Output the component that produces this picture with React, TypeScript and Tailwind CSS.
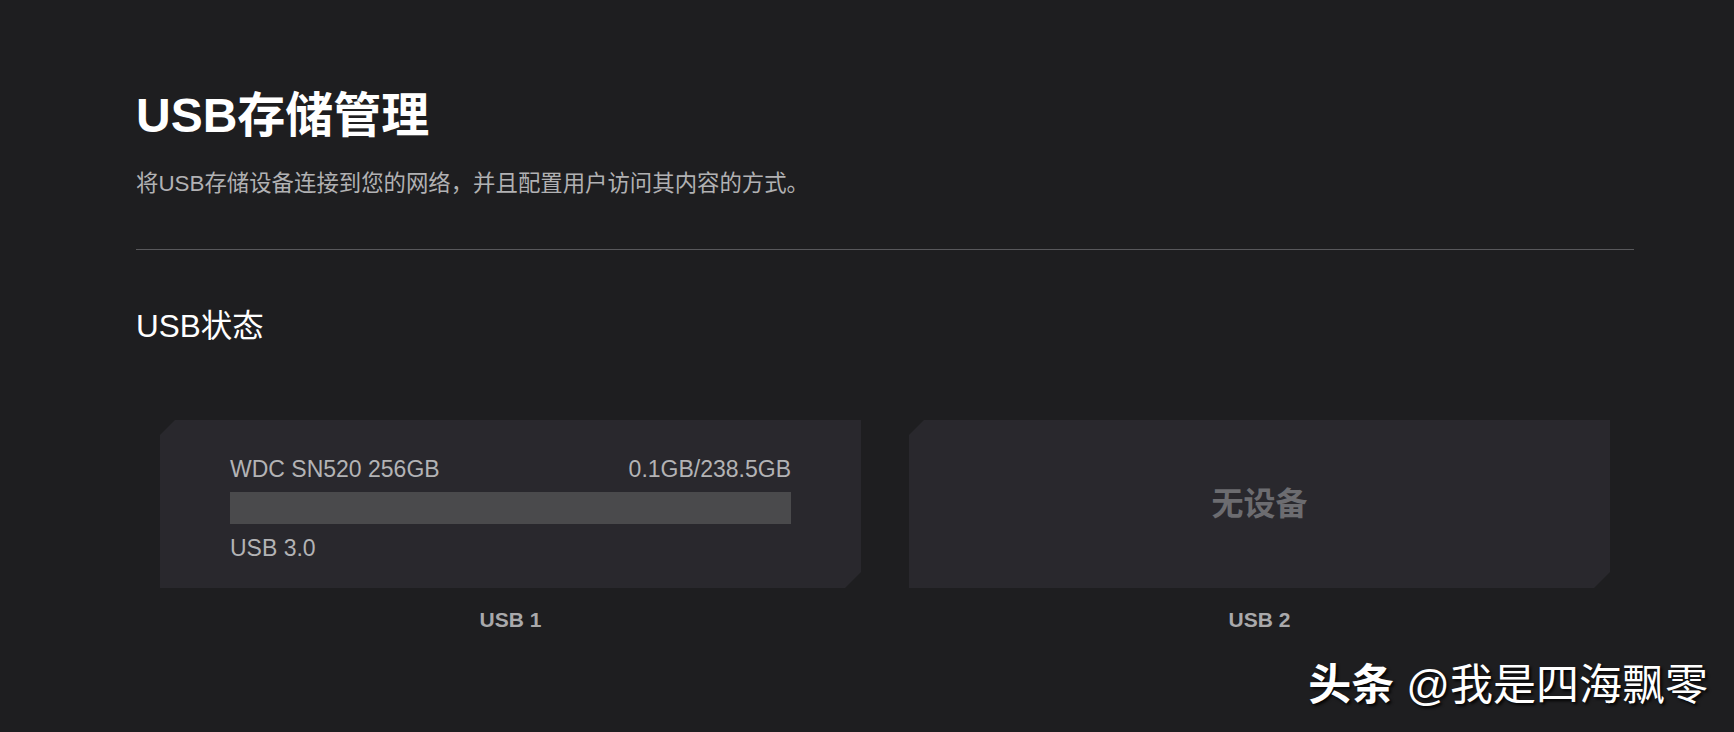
import React from 'react';

type Port = {
  id: number;
  device: null | { name: string; used: number; total: number; speed: string };
};

const ports: Port[] = [
  { id: 1, device: { name: 'WDC SN520 256GB', used: 0.1, total: 238.5, speed: 'USB 3.0' } },
  { id: 2, device: null },
];

const cardShape =
  '[clip-path:polygon(15px_0,100%_0,100%_calc(100%-16px),calc(100%-16px)_100%,0_100%,0_15px)]';

export default function App() {
  return (
    <div className="relative min-h-[732px] bg-[#1e1e20] font-['Liberation_Sans','Noto_Sans_CJK_SC',sans-serif] pl-[136px] pr-[100px] pt-[88px]">
      {/* Header */}
      <h1 className="text-[48px] leading-[56px] font-bold text-white">USB存储管理</h1>
      <p className="mt-[25px] text-[22.4px] leading-[30px] text-[#b1b1b3]">
        将USB存储设备连接到您的网络，并且配置用户访问其内容的方式。
      </p>
      <div className="mt-[50px] h-px bg-[#58585b]" />

      <h2 className="mt-[56px] text-[31.5px] leading-[40px] text-white">USB状态</h2>

      {/* Ports */}
      <div className="mt-[74px] px-6 grid grid-cols-2 gap-12">
        {ports.map((port) => (
          <div key={port.id} className="flex flex-col">
            <div className={`h-[168px] bg-[#29282d] ${cardShape}`}>
              {port.device ? (
                <div className="px-[70px] pt-[35px] text-[23px] leading-[28px] text-[#b3b3b5]">
                  <div className="flex items-center justify-between">
                    <span>{port.device.name}</span>
                    <span>
                      {port.device.used}GB/{port.device.total}GB
                    </span>
                  </div>
                  <div className="mt-[9px] h-[32px] bg-[#4a4a4c]">
                    <div
                      className="h-full bg-[#2d8cf0]"
                      style={{ width: `${Math.floor((port.device.used / port.device.total) * 100)}%` }}
                    />
                  </div>
                  <div className="mt-[10px]">{port.device.speed}</div>
                </div>
              ) : (
                <div className="h-full flex items-center justify-center text-[32px] font-bold text-[#6c6c70]">
                  无设备
                </div>
              )}
            </div>
            <div className="mt-[18px] text-center text-[21px] leading-[28px] font-semibold text-[#a9a9ab]">
              USB {port.id}
            </div>
          </div>
        ))}
      </div>

      {/* watermark */}
      <div className="absolute right-[26px] top-[659px] flex items-center gap-3 text-[43px] leading-[52px] text-white [text-shadow:2px_2px_3px_rgba(0,0,0,0.9)]">
        <span className="font-bold">头条</span>
        <span>@我是四海飘零</span>
      </div>
    </div>
  );
}
